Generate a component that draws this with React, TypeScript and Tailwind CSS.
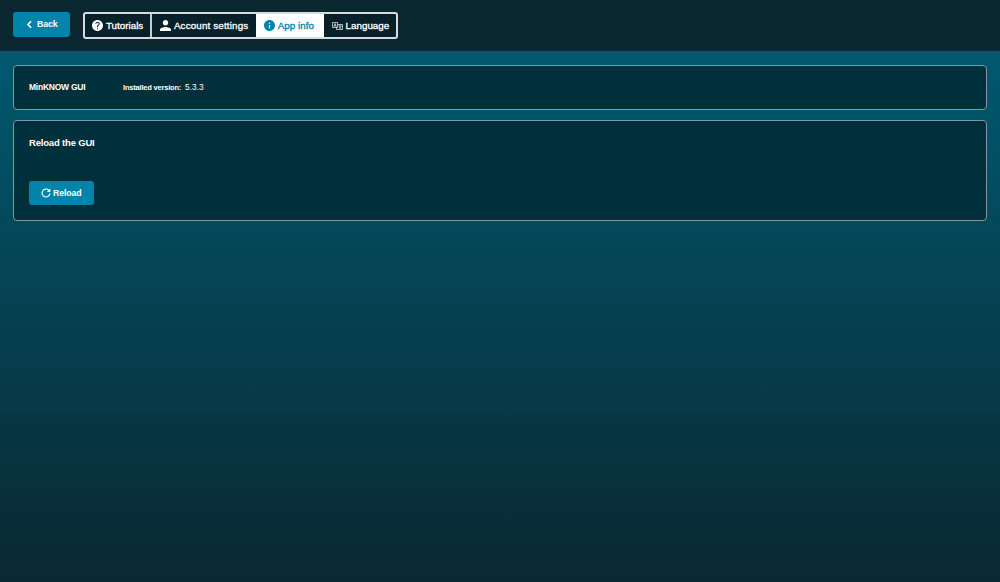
import type { ReactNode } from "react";

function Tab({ className, icon, label }: { className: string; icon: ReactNode; label: string }) {
  return (
    <button className={`flex h-full items-center gap-[3px] pl-[7.500px] text-[9.800px] whitespace-nowrap ${className}`}>
      {icon}
      <span className="pt-px [-webkit-text-stroke:0.3px_currentColor]">{label}</span>
    </button>
  );
}

const Help = () => (
  <svg viewBox="2 2 20 20" className="size-[11px] shrink-0" fill="currentColor">
    <path d="M12 2C6.48 2 2 6.48 2 12s4.48 10 10 10 10-4.48 10-10S17.52 2 12 2zm1 17h-2v-2h2v2zm2.07-7.75-.9.92C13.45 12.9 13 13.5 13 15h-2v-.5c0-1.1.45-2.1 1.17-2.83l1.24-1.26c.37-.36.59-.86.59-1.41 0-1.1-.9-2-2-2s-2 .9-2 2H8c0-2.21 1.79-4 4-4s4 1.79 4 4c0 .88-.36 1.68-.93 2.25z" />
  </svg>
);
const Person = () => (
  <svg viewBox="4 4 16 16" className="size-[11px] shrink-0" fill="currentColor">
    <path d="M12 12c2.21 0 4-1.79 4-4s-1.79-4-4-4-4 1.79-4 4 1.79 4 4 4zm0 2c-2.67 0-8 1.34-8 4v2h16v-2c0-2.66-5.33-4-8-4z" />
  </svg>
);
const Info = () => (
  <svg viewBox="2 2 20 20" className="size-[11px] shrink-0" fill="currentColor">
    <path d="M12 2C6.48 2 2 6.48 2 12s4.48 10 10 10 10-4.48 10-10S17.52 2 12 2zm1.200 15h-2.400v-6h2.400v6zm0-8h-2.400V6.600h2.400V9z" />
  </svg>
);
const Translate = () => (
  <svg viewBox="0 0 22 16" className="h-2 w-[11px] shrink-0" fill="none" stroke="currentColor" strokeWidth="1.300">
    <path d="M11 11H1V1h10zM11 5h10v10H9v-4M3.500 9.500 6 3l2.500 6.500M4.500 7.500h3M13 8h6M16 6v2M18.500 8c-.5 2.500-2 4-4.500 5M14 9c1 2 2.500 3.500 4.500 4" />
  </svg>
);
const Refresh = () => (
  <svg viewBox="0 0 24 24" className="size-[10px] shrink-0" fill="none" stroke="currentColor" strokeWidth="2.800">
    <path d="M21.500 13A9.500 9.500 0 1 1 18.500 5l2.500 2.500" />
    <path d="M22.500 1v8.500H14z" fill="currentColor" stroke="none" />
  </svg>
);

export default function App() {
  return (
    <div className="flex h-[582px] w-full flex-col bg-[#0b272f] font-['Liberation_Sans',sans-serif] text-white">
      <header className="flex h-[51px] shrink-0 items-start pt-3 pl-[13px]">
        <button className="flex h-[25px] w-[57px] items-center rounded-[3px] bg-[#0084a9] pl-[14px] text-[8.800px] font-bold">
          <svg viewBox="0 0 6 10" className="mr-[5px] h-[9px] w-[5px]" fill="none" stroke="currentColor" strokeWidth="1.800">
            <path d="M5 1 1 5l4 4" />
          </svg>
          <span className="pt-px tracking-[-0.15px]">Back</span>
        </button>
        <nav className="ml-[12.500px] flex h-[27px] w-[315.500px] overflow-hidden rounded-[3px] border-2 border-[#d5dcde] bg-[#08202a]">
          <Tab className="w-[68px] border-r-2 border-[#c5cdcf]" icon={<Help />} label="Tutorials" />
          <Tab className="w-[104px] tracking-[0.16px]" icon={<Person />} label="Account settings" />
          <Tab className="w-[68px] bg-white tracking-[0.05px] text-[#0084a9]" icon={<Info />} label="App info" />
          <Tab className="w-[72px]" icon={<Translate />} label="Language" />
        </nav>
      </header>
      <main className="flex flex-1 flex-col gap-[10px] bg-[linear-gradient(180deg,#005970,#0a2831)] px-[13px] pt-[14px]">
        <section className="flex h-[45px] items-center rounded-[4px] border border-[#80989e] bg-[#00303b] pl-[15px]">
          <h2 className="w-[94px] text-[8.500px] font-bold tracking-[-0.25px]">MinKNOW GUI</h2>
          <span className="text-[7.500px] font-bold tracking-[-0.2px]">Installed version:</span>
          <span className="ml-1 text-[8.400px]">5.3.3</span>
        </section>
        <section className="flex h-[101px] flex-col items-start rounded-[4px] border border-[#80989e] bg-[#00303b] pt-[15px] pl-[15px]">
          <h2 className="text-[9.500px] leading-[14px] font-bold tracking-[-0.18px]">Reload the GUI</h2>
          <button className="mt-[31px] flex h-6 w-[65px] items-center gap-[2px] rounded-[3px] bg-[#0084a9] pl-3 text-[8.800px] font-bold">
            <Refresh />
            <span className="pt-px tracking-[-0.15px]">Reload</span>
          </button>
        </section>
      </main>
    </div>
  );
}
